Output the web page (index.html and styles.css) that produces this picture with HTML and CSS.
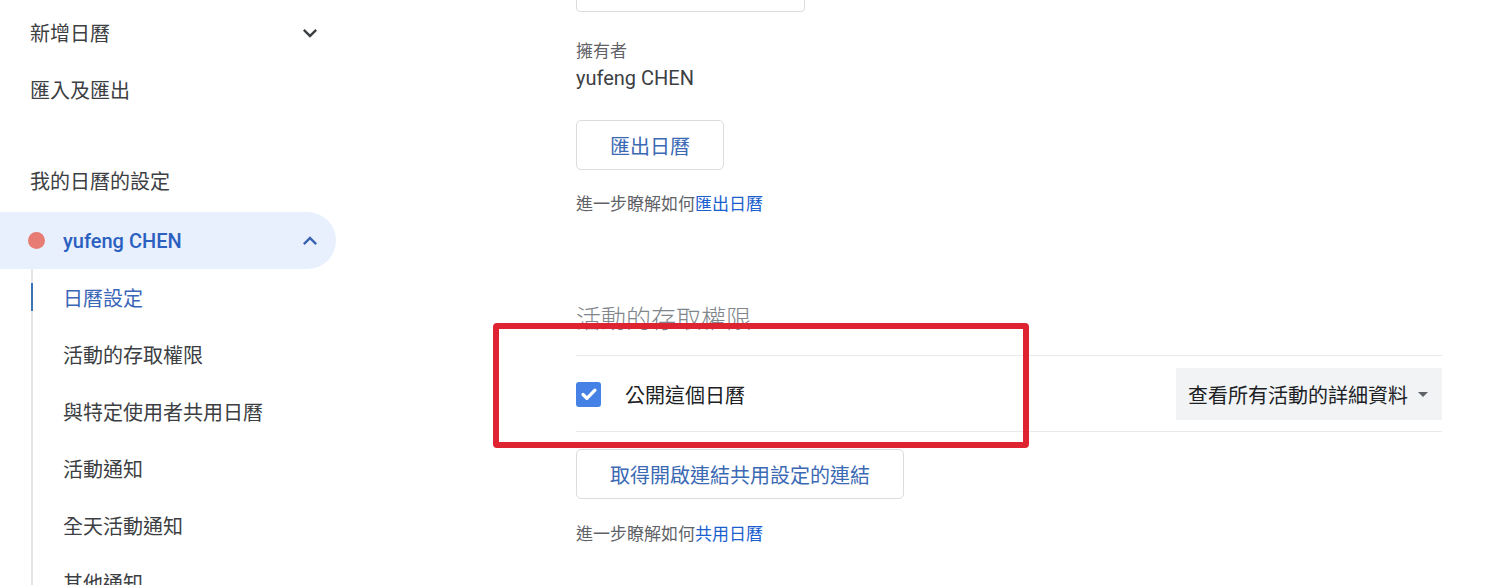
FILE: index.html
```html
<!DOCTYPE html>
<html lang="zh-Hant">
<head>
<meta charset="utf-8">
<title>日曆設定</title>
<link rel="stylesheet" href="styles.css">
</head>
<body>
<div class="page">
  <nav class="sidebar">
    <div class="nav-item">
      <span>新增日曆</span>
      <svg class="chev" viewBox="0 0 24 24" width="28" height="28"><path d="M7.41 8.59L12 13.17l4.59-4.58L18 10l-6 6-6-6 1.41-1.41z"/></svg>
    </div>
    <div class="nav-item"><span>匯入及匯出</span></div>
    <div class="nav-item nav-header"><span>我的日曆的設定</span></div>
    <div class="nav-item nav-cal">
      <span class="cal-name"><span class="dot"></span>yufeng CHEN</span>
      <svg class="chev chev-up" viewBox="0 0 24 24" width="28" height="28"><path d="M12 8l-6 6 1.41 1.41L12 10.83l4.59 4.58L18 14z"/></svg>
    </div>
    <div class="sublist">
      <div class="sub-item active">日曆設定</div>
      <div class="sub-item">活動的存取權限</div>
      <div class="sub-item">與特定使用者共用日曆</div>
      <div class="sub-item">活動通知</div>
      <div class="sub-item">全天活動通知</div>
      <div class="sub-item">其他通知</div>
    </div>
  </nav>

  <main class="main">
    <div class="content">
      <div class="top-box"></div>
      <div class="label">擁有者</div>
      <div class="owner">yufeng CHEN</div>
      <button class="btn btn-export">匯出日曆</button>
      <p class="help">進一步瞭解如何<a class="link">匯出日曆</a></p>

      <section class="access">
        <h2 class="section-title">活動的存取權限</h2>
        <div class="row">
          <div class="check-wrap">
            <span class="checkbox">
              <svg viewBox="0 0 24 24" width="22" height="22"><path d="M5.5 12.5l4.2 4.2L18.5 7.8" fill="none" stroke="#fff" stroke-width="3.6" stroke-linecap="round" stroke-linejoin="round"/></svg>
            </span>
            <span class="row-label">公開這個日曆</span>
          </div>
          <div class="dropdown">
            <span>查看所有活動的詳細資料</span>
            <span class="caret"></span>
          </div>
        </div>
        <button class="btn btn-share">取得開啟連結共用設定的連結</button>
        <p class="help help-share">進一步瞭解如何<a class="link">共用日曆</a></p>
        <div class="highlight"></div>
      </section>
    </div>
  </main>
</div>
</body>
</html>
```

FILE: styles.css
```css
* { box-sizing: border-box; }

html, body {
  margin: 0;
  padding: 0;
  background: #fff;
  overflow: hidden;
}

body {
  font-family: Roboto, "Noto Sans CJK TC", "Noto Sans", sans-serif;
  color: #3c4043;
  width: 1493px;
  height: 585px;
}

.page {
  display: flex;
  align-items: flex-start;
  height: 585px;
  overflow: hidden;
}

/* Sidebar */
.sidebar {
  width: 336px;
  flex: none;
  padding-top: 4px;
}

.nav-item {
  height: 57px;
  display: flex;
  align-items: center;
  justify-content: space-between;
  padding: 0 12px 0 30px;
  font-size: 20px;
  color: #3c4043;
  white-space: nowrap;
}

.nav-header {
  margin-top: 34px;
}

.chev {
  fill: #3c4043;
  display: block;
}

.nav-cal {
  height: 57px;
  margin-top: 3px;
  background: #e8f0fe;
  border-radius: 0 29px 29px 0;
  padding-left: 28px;
}

.cal-name {
  display: flex;
  align-items: center;
  gap: 18px;
  color: #2b60c0;
  font-weight: 500;
}

.dot {
  width: 17px;
  height: 17px;
  border-radius: 50%;
  background: #e67c73;
  display: inline-block;
}

.chev-up {
  fill: #3a62b0;
}

.sublist {
  margin-left: 31px;
  margin-top: 14px;
  border-left: 2px solid #e3e5e8;
  height: 400px;
}

.sub-item {
  height: 57px;
  display: flex;
  align-items: center;
  padding-left: 30px;
  font-size: 20px;
  color: #3c4043;
  white-space: nowrap;
}

.sub-item:first-child {
  margin-top: -14px;
  position: relative;
}

.sub-item.active {
  color: #3a66b8;
}

.sub-item.active::before {
  content: "";
  position: absolute;
  left: -2px;
  top: 14px;
  width: 2px;
  height: 28px;
  background: #3b74b5;
}

/* Main */
.main {
  flex: 1;
  padding-left: 240px;
}

.content {
  width: 866px;
}

.top-box {
  width: 229px;
  height: 50px;
  margin-top: -38px;
  border: 1px solid #dadce0;
  border-radius: 4px;
}

.label {
  margin-top: 27px;
  font-size: 17px;
  line-height: 24px;
  color: #5f6368;
}

.owner {
  margin-top: 1px;
  font-size: 20px;
  line-height: 28px;
  color: #3c4043;
}

.btn {
  display: block;
  height: 50px;
  padding: 0 33px;
  background: #fff;
  border: 1px solid #dadce0;
  border-radius: 5px;
  font-family: Roboto, "Noto Sans CJK TC", sans-serif;
  font-size: 20px;
  color: #3b69b3;
  white-space: nowrap;
}

.btn-export {
  margin-top: 28px;
}

.help {
  margin: 22px 0 0;
  font-size: 17px;
  line-height: 24px;
  color: #5f6368;
  white-space: nowrap;
}

.link {
  color: #1b5fcf;
}

.access {
  position: relative;
  margin-top: 88px;
}

.section-title {
  margin: 0;
  font-size: 25px;
  line-height: 32px;
  font-weight: 300;
  color: #80868b;
  white-space: nowrap;
}

.row {
  margin-top: 19px;
  height: 77px;
  border-top: 1px solid #e8eaed;
  border-bottom: 1px solid #e8eaed;
  display: flex;
  align-items: center;
  justify-content: space-between;
}

.check-wrap {
  display: flex;
  align-items: center;
  gap: 24px;
  padding-top: 1px;
}

.checkbox {
  width: 25px;
  height: 25px;
  border-radius: 3px;
  background: #4682e6;
  display: flex;
  align-items: center;
  justify-content: center;
}

.row-label {
  font-size: 20px;
  color: #202124;
  white-space: nowrap;
}

.dropdown {
  height: 52px;
  display: flex;
  align-items: center;
  gap: 10px;
  padding: 0 14px 0 12px;
  background: #f1f3f4;
  font-size: 20px;
  color: #202124;
  white-space: nowrap;
  margin-top: 1px;
}

.caret {
  width: 0;
  height: 0;
  border-left: 5px solid transparent;
  border-right: 5px solid transparent;
  border-top: 5px solid #5f6368;
}

.btn-share {
  margin-top: 17px;
}

.help-share {
  margin-top: 23px;
}

.highlight {
  position: absolute;
  left: -83px;
  top: 19px;
  width: 536px;
  height: 125px;
  border: 6px solid #de2430;
  border-radius: 4px;
  pointer-events: none;
}
```
